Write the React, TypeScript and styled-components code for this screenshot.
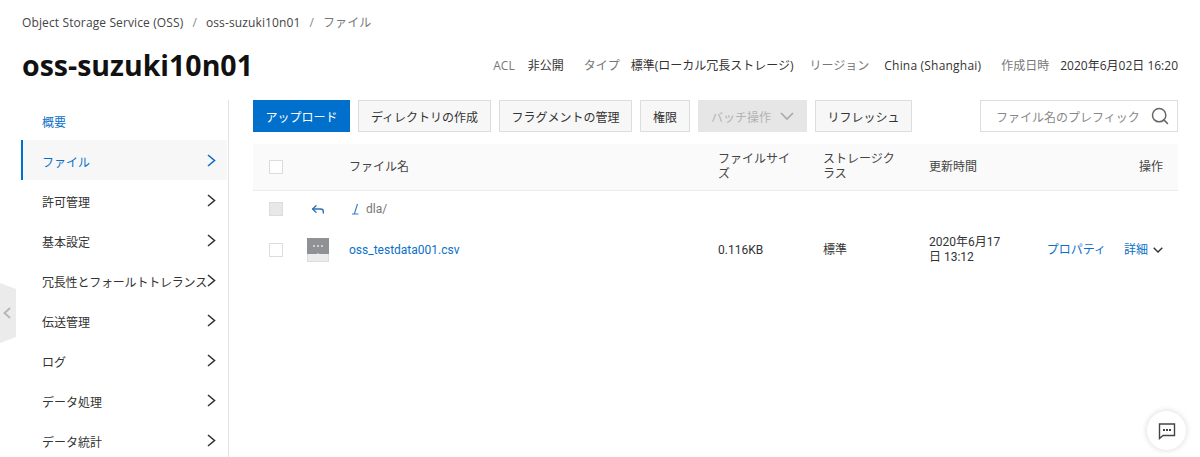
import React from "react";
import styled, { createGlobalStyle } from "styled-components";
import { Search, Reply } from "lucide-react";

const GlobalStyle = createGlobalStyle`
    html, body {
        margin: 0;
        padding: 0;
        background: #ffffff;
        overflow: hidden;
    }
    body {
        font-family: "Roboto", "Noto Sans CJK JP", sans-serif;
        font-size: 12px;
        color: #333333;
    }
`;

const Page = styled.div`
    position: relative;
    width: 1200px;
    height: 457px;
    overflow: hidden;
    box-sizing: border-box;
    padding: 0 22px 0 21px;
`;

const Breadcrumb = styled.div`
    display: flex;
    align-items: center;
    height: 44px;
    padding-left: 1px;
    font-family: "Open Sans", "Noto Sans CJK JP", sans-serif;
    font-size: 12px;
    letter-spacing: 0.12px;
`;

const Crumb = styled.span<{ $last?: boolean }>`
    color: ${(p) => (p.$last ? "#777777" : "#444444")};
`;

const CrumbSep = styled.span`
    margin: 0 9px;
    color: #888888;
`;

const TitleRow = styled.div`
    display: flex;
    align-items: center;
    justify-content: space-between;
    height: 42px;
`;

const Title = styled.h1`
    margin: 0;
    padding-left: 1px;
    font-family: "Open Sans", sans-serif;
    font-size: 28.5px;
    font-weight: 700;
    color: #111111;
`;

const Meta = styled.div`
    display: flex;
    align-items: center;
    font-family: "Open Sans", "Noto Sans CJK JP", sans-serif;
    font-size: 12px;
`;

const MetaLabel = styled.span<{ $before?: number; $after?: number }>`
    color: #777777;
    margin-left: ${(p) => p.$before ?? 20}px;
    margin-right: ${(p) => p.$after ?? 11}px;
`;

const MetaValue = styled.span<{ $wide?: boolean }>`
    color: #333333;
    letter-spacing: ${(p) => (p.$wide ? "0.2px" : "0")};
`;

const Body = styled.div`
    display: flex;
    margin-top: 14px;
`;

const Sidebar = styled.nav`
    width: 207px;
    height: 400px;
    flex: none;
    border-right: 1px solid #e3e3e3;
`;

const NavItem = styled.div<{ $active?: boolean; $link?: boolean }>`
    display: flex;
    align-items: center;
    box-sizing: border-box;
    height: 40px;
    margin-right: 1px;
    padding: 0 11px 0 19px;
    color: ${(p) => (p.$active || p.$link ? "#0a6fc9" : "#333333")};
    background: ${(p) => (p.$active ? "#f7f7f7" : "transparent")};
    border-left: 2px solid ${(p) => (p.$active ? "#0070cc" : "transparent")};

    svg {
        margin-top: 1px;
    }
`;

const NavLabel = styled.span<{ $tight?: boolean }>`
    flex: 1;
    min-width: 0;
    padding-top: 3px;
    white-space: nowrap;
    letter-spacing: ${(p) => (p.$tight ? "-0.2px" : "0")};
`;

const Main = styled.div`
    flex: 1;
    margin-left: 24px;
`;

const Toolbar = styled.div`
    display: flex;
    align-items: center;
    gap: 8px;
    height: 32px;
`;

const Button = styled.div<{ $width: number; $primary?: boolean; $disabled?: boolean }>`
    display: flex;
    align-items: center;
    justify-content: center;
    box-sizing: border-box;
    width: ${(p) => p.$width}px;
    height: 32px;
    white-space: nowrap;
    border: 1px solid ${(p) => (p.$primary ? "#0070cc" : p.$disabled ? "#e6e6e6" : "#dddddd")};
    background: ${(p) => (p.$primary ? "#0070cc" : p.$disabled ? "#e6e6e6" : "#f7f7f7")};
    color: ${(p) => (p.$primary ? "#ffffff" : p.$disabled ? "#b3b3b3" : "#333333")};
`;

const ButtonCaret = styled.span`
    display: flex;
    margin-left: 9px;
    color: #aaaaaa;
`;

const SearchBox = styled.div`
    display: flex;
    align-items: center;
    justify-content: space-between;
    box-sizing: border-box;
    width: 198px;
    height: 32px;
    margin-left: auto;
    padding: 0 7px 0 15px;
    border: 1px solid #dddddd;
    color: #888888;
    white-space: nowrap;
`;

const Table = styled.div`
    margin-top: 12px;
`;

const columns = "38px 42px 369px 105px 106px 105px 1fr";

const HeaderRow = styled.div`
    display: grid;
    grid-template-columns: ${columns};
    align-items: center;
    box-sizing: border-box;
    height: 47px;
    padding: 0 15px 0 16px;
    background: #fafafa;
    border-bottom: 1px solid #ececec;
    line-height: 15px;
    color: #444444;
`;

const Row = styled.div<{ $height: number }>`
    display: grid;
    grid-template-columns: ${columns};
    align-items: center;
    box-sizing: border-box;
    height: ${(p) => p.$height}px;
    padding: 0 15px 0 16px;
    line-height: 15px;
`;

const Cell = styled.div<{ $right?: boolean }>`
    padding-right: ${(p) => (p.$right ? "0" : "30px")};
    text-align: ${(p) => (p.$right ? "right" : "left")};
`;

const NameCell = styled.div`
    display: flex;
    align-items: center;
    white-space: nowrap;
`;

const IconCell = styled.div<{ $inset?: number }>`
    display: flex;
    align-items: center;
    padding-left: ${(p) => p.$inset ?? 0}px;
`;

const Checkbox = styled.div<{ $disabled?: boolean }>`
    box-sizing: border-box;
    width: 14px;
    height: 14px;
    border: 1px solid #dcdcdc;
    background: ${(p) => (p.$disabled ? "#e8e8e8" : "#ffffff")};
`;

const Link = styled.span`
    color: #0a6fc9;
    white-space: nowrap;
`;

const Directory = styled.span`
    margin-left: 7px;
    color: #777777;
`;

const SlashWrap = styled.span`
    display: flex;
    margin-left: 3px;
`;

const Actions = styled.div`
    display: flex;
    align-items: center;
    justify-content: flex-end;
    gap: 18px;
    margin-left: -20px;
    white-space: nowrap;
`;

const MoreLink = styled.span`
    display: flex;
    align-items: center;
    gap: 5px;
    color: #333333;
`;

const CollapseHandle = styled.div`
    position: absolute;
    left: 0;
    top: 283px;
    width: 16px;
    height: 60px;
    box-sizing: border-box;
    padding-left: 3px;
    display: flex;
    align-items: center;
    background: #ebebeb;
    clip-path: polygon(0 0, 100% 6px, 100% 54px, 0 100%);
    color: #b5b5b5;
`;

const ChatButton = styled.div`
    position: absolute;
    left: 1147px;
    top: 411px;
    width: 39px;
    height: 39px;
    display: flex;
    align-items: center;
    justify-content: center;
    background: #ffffff;
    border-radius: 50%;
    box-shadow: 0 0 6px rgba(0, 0, 0, 0.16);
`;

const navItems = ["許可管理", "基本設定", "冗長性とフォールトトレランス", "伝送管理", "ログ", "データ処理", "データ統計"];

const RightChevron = () => (
    <svg width="9" height="13" viewBox="0 0 9 13" fill="none" style={{ flex: "none" }}>
        <path d="M1 1l6.5 5.5L1 12" stroke="currentColor" strokeWidth="1.6" />
    </svg>
);

const LeftChevron = () => (
    <svg width="8" height="12" viewBox="0 0 8 12" fill="none">
        <path d="M7 1L1.5 6 7 11" stroke="currentColor" strokeWidth="1.8" />
    </svg>
);

const DownChevron: React.FC<{ width: number }> = ({ width }) => (
    <svg width={width} height={width * 0.6} viewBox="0 0 14 8.4" fill="none">
        <path d="M1 1l6 6 6-6" stroke="currentColor" strokeWidth={width > 12 ? 1.7 : 2} />
    </svg>
);

const FolderSlash = () => (
    <svg width="7" height="12" viewBox="0 0 7 12" fill="none">
        <path d="M5.5 1L2.5 10.5M0 11h6.5" stroke="#2f7ad0" strokeWidth="1.1" />
    </svg>
);

const FileIcon = () => (
    <svg width="22" height="24" viewBox="0 0 22 24" style={{ flex: "none" }}>
        <rect x="0.5" y="0.5" width="21" height="23" fill="#ebebeb" stroke="#dddddd" />
        <path d="M0 0h22v16H12l-1-1-1 1H0z" fill="#8f9194" />
        <circle cx="7" cy="8" r="1" fill="#e6e6e6" />
        <circle cx="11" cy="8" r="1" fill="#e6e6e6" />
        <circle cx="15" cy="8" r="1" fill="#e6e6e6" />
    </svg>
);

const ChatIcon = () => (
    <svg width="18" height="18" viewBox="0 0 18 18" fill="none">
        <path d="M1.5 2h15v11.5H5L1.5 16.5z" stroke="#444444" strokeWidth="1.4" />
        <rect x="5" y="7" width="2" height="2" fill="#444444" />
        <rect x="8" y="7" width="2" height="2" fill="#444444" />
        <rect x="11" y="7" width="2" height="2" fill="#444444" />
    </svg>
);

const App: React.FC = () => {
    return (
        <Page>
            <GlobalStyle />
            <Breadcrumb>
                <Crumb>Object Storage Service (OSS)</Crumb>
                <CrumbSep>/</CrumbSep>
                <Crumb>oss-suzuki10n01</Crumb>
                <CrumbSep>/</CrumbSep>
                <Crumb $last>ファイル</Crumb>
            </Breadcrumb>
            <TitleRow>
                <Title>oss-suzuki10n01</Title>
                <Meta>
                    <MetaLabel $after={13}>ACL</MetaLabel>
                    <MetaValue>非公開</MetaValue>
                    <MetaLabel>タイプ</MetaLabel>
                    <MetaValue>標準(ローカル冗長ストレージ)</MetaValue>
                    <MetaLabel $before={16} $after={15}>リージョン</MetaLabel>
                    <MetaValue $wide>China (Shanghai)</MetaValue>
                    <MetaLabel>作成日時</MetaLabel>
                    <MetaValue>2020年6月02日 16:20</MetaValue>
                </Meta>
            </TitleRow>
            <Body>
                <Sidebar>
                    <NavItem $link>
                        <NavLabel>概要</NavLabel>
                    </NavItem>
                    <NavItem $active>
                        <NavLabel>ファイル</NavLabel>
                        <RightChevron />
                    </NavItem>
                    {navItems.map((item) => (
                        <NavItem key={item}>
                            <NavLabel $tight={item.length > 10}>{item}</NavLabel>
                            <RightChevron />
                        </NavItem>
                    ))}
                </Sidebar>
                <Main>
                    <Toolbar>
                        <Button $primary $width={97}>アップロード</Button>
                        <Button $width={133}>ディレクトリの作成</Button>
                        <Button $width={133}>フラグメントの管理</Button>
                        <Button $width={50}>権限</Button>
                        <Button $disabled $width={109}>
                            バッチ操作
                            <ButtonCaret>
                                <DownChevron width={14} />
                            </ButtonCaret>
                        </Button>
                        <Button $width={97}>リフレッシュ</Button>
                        <SearchBox>
                            ファイル名のプレフィック
                            <Search size={20} strokeWidth={1.8} color="#666666" />
                        </SearchBox>
                    </Toolbar>
                    <Table>
                        <HeaderRow>
                            <Checkbox />
                            <span />
                            <NameCell>ファイル名</NameCell>
                            <Cell>ファイルサイズ</Cell>
                            <Cell>ストレージクラス</Cell>
                            <Cell>更新時間</Cell>
                            <Cell $right>操作</Cell>
                        </HeaderRow>
                        <Row $height={36}>
                            <Checkbox $disabled />
                            <IconCell $inset={3}>
                                <Reply size={16} strokeWidth={2} color="#2f6fb5" />
                            </IconCell>
                            <NameCell>
                                <SlashWrap>
                                    <FolderSlash />
                                </SlashWrap>
                                <Directory>dla/</Directory>
                            </NameCell>
                        </Row>
                        <Row $height={46}>
                            <Checkbox />
                            <IconCell>
                                <FileIcon />
                            </IconCell>
                            <NameCell>
                                <Link>oss_testdata001.csv</Link>
                            </NameCell>
                            <Cell>0.116KB</Cell>
                            <Cell>標準</Cell>
                            <Cell>2020年6月17日 13:12</Cell>
                            <Actions>
                                <Link>プロパティ</Link>
                                <MoreLink>
                                    <Link>詳細</Link>
                                    <DownChevron width={10} />
                                </MoreLink>
                            </Actions>
                        </Row>
                    </Table>
                </Main>
            </Body>
            <CollapseHandle>
                <LeftChevron />
            </CollapseHandle>
            <ChatButton>
                <ChatIcon />
            </ChatButton>
        </Page>
    );
};

export default App;
